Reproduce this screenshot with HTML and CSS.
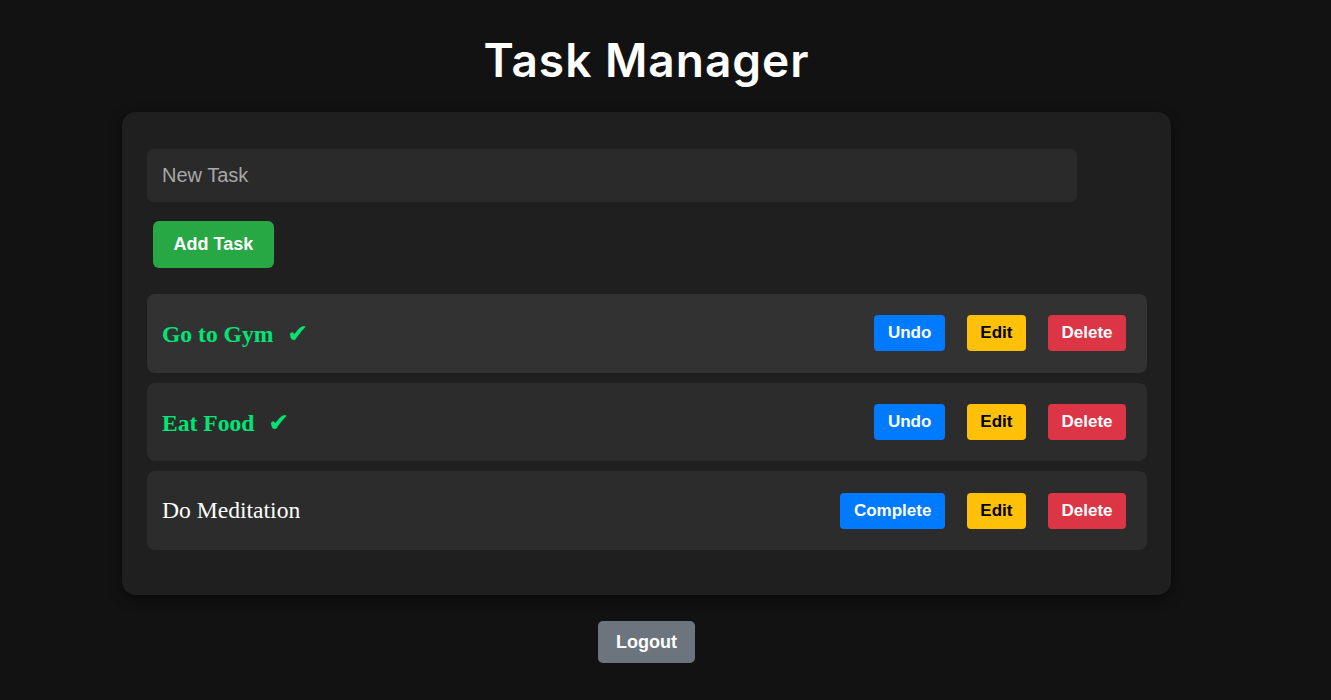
FILE: index.html
```html
<!DOCTYPE html>
<html lang="en">
<head>
<meta charset="utf-8">
<title>Task Manager</title>
<link rel="stylesheet" href="styles.css">
</head>
<body>
<div class="app">
  <h1 class="title">Task Manager</h1>
  <div class="card">
    <input class="new-task" type="text" placeholder="New Task">
    <div class="add-row"><button class="btn btn-add">Add Task</button></div>
    <ul class="tasks">
      <li class="task task-hover">
        <span class="task-text done">Go to Gym <span class="check">✔</span></span>
        <div class="actions">
          <button class="btn btn-sm btn-blue">Undo</button>
          <button class="btn btn-sm btn-yellow">Edit</button>
          <button class="btn btn-sm btn-red">Delete</button>
        </div>
      </li>
      <li class="task">
        <span class="task-text done">Eat Food <span class="check">✔</span></span>
        <div class="actions">
          <button class="btn btn-sm btn-blue">Undo</button>
          <button class="btn btn-sm btn-yellow">Edit</button>
          <button class="btn btn-sm btn-red">Delete</button>
        </div>
      </li>
      <li class="task">
        <span class="task-text">Do Meditation</span>
        <div class="actions">
          <button class="btn btn-sm btn-blue">Complete</button>
          <button class="btn btn-sm btn-yellow">Edit</button>
          <button class="btn btn-sm btn-red">Delete</button>
        </div>
      </li>
    </ul>
  </div>
  <div class="logout-row"><button class="btn btn-logout">Logout</button></div>
</div>
</body>
</html>
```
FILE: styles.css
```css
html, body {
  margin: 0;
  padding: 0;
  background: #121212;
}
body {
  font-family: "Liberation Sans", Arial, sans-serif;
  color: #fff;
}
.app {
  width: 1293px;
  display: flex;
  flex-direction: column;
  align-items: center;
}
.title {
  font-family: Inter, "Open Sans", sans-serif;
  font-weight: 600;
  font-size: 46px;
  line-height: 56px;
  margin: 32px 0 24px;
  color: #fff;
  letter-spacing: 1px;
}
.card {
  width: 1049px;
  box-sizing: border-box;
  background: #1f1f1f;
  border-radius: 14px;
  padding: 37px 24px 45px 25px;
  box-shadow: 0 4px 12px rgba(0, 0, 0, 0.5);
}
.new-task {
  display: block;
  width: 930px;
  height: 53px;
  box-sizing: border-box;
  background: #2a2a2a;
  border: none;
  border-radius: 6px;
  padding: 0 15px;
  font-family: "Liberation Sans", Arial, sans-serif;
  font-size: 20px;
  color: #fff;
  outline: none;
}
.new-task::placeholder {
  color: #a8a8a8;
}
.add-row {
  margin: 19px 0 26px 6px;
}
.btn {
  border: none;
  font-family: "Liberation Sans", Arial, sans-serif;
  font-weight: bold;
  color: #fff;
  cursor: pointer;
}
.btn-add {
  background: #28a745;
  font-size: 18px;
  line-height: 21px;
  padding: 13px 20.5px;
  border-radius: 6px;
}
.tasks {
  list-style: none;
  margin: 0;
  padding: 0;
  display: flex;
  flex-direction: column;
  gap: 10px;
}
.task {
  height: 78.7px;
  box-sizing: border-box;
  background: #2c2c2c;
  border-radius: 8px;
  padding: 0 21px 0 15px;
  display: flex;
  align-items: center;
  justify-content: space-between;
}
.task-hover {
  background: #323232;
}
.task-text {
  font-family: "Liberation Serif", "Times New Roman", serif;
  font-size: 23.6px;
  color: #fff;
}
.task-text.done {
  color: #00e676;
  font-weight: bold;
}
.check {
  font-family: "DejaVu Sans", sans-serif;
  font-size: 25px;
  margin-left: 8px;
}
.actions {
  display: flex;
  gap: 22px;
}
.btn-sm {
  font-size: 17px;
  line-height: 20px;
  padding: 8px 13.5px;
  border-radius: 4px;
}
.btn-blue { background: #007bff; }
.btn-yellow { background: #ffc107; color: #000; }
.btn-red { background: #dc3545; }
.logout-row {
  margin-top: 26px;
}
.btn-logout {
  background: #6c757d;
  font-size: 18px;
  line-height: 21px;
  padding: 10.5px 18.5px;
  border-radius: 5px;
}
```
